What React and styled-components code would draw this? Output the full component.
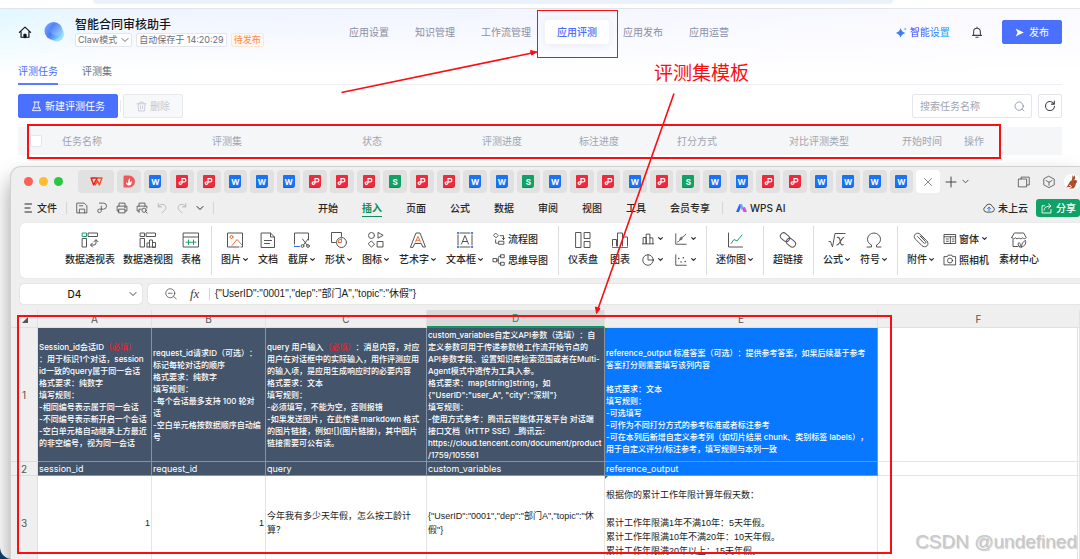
import React from "react";
import styled, { createGlobalStyle } from "styled-components";

const TABS = "DWPPWWWPPPSPPWWSWPPWPSWWPPWWWW".split("");

const NAV = ["应用设置", "知识管理", "工作流管理", "应用评测", "应用发布", "应用运营"];

const TASK_COLUMNS = [
  { label: "任务名称", width: 150 },
  { label: "评测集", width: 150 },
  { label: "状态", width: 120 },
  { label: "评测进度", width: 97 },
  { label: "标注进度", width: 98 },
  { label: "打分方式", width: 112 },
  { label: "对比评测类型", width: 113 },
  { label: "开始时间", width: 62 },
  { label: "操作", width: 110 },
];

const MENUS = ["开始", "插入", "页面", "公式", "数据", "审阅", "视图", "工具", "会员专享"];

const SHEET_COLUMNS = [
  { name: "A", width: 114 },
  { name: "B", width: 114 },
  { name: "C", width: 161 },
  { name: "D", width: 178 },
  { name: "E", width: 273 },
  { name: "F", width: 200 },
];

/* ---------- icons ---------- */

const Svg = ({ w = 16, h = w, box = "0 0 16 16", children }) => (
  <svg
    width={w}
    height={h}
    viewBox={box}
    fill="none"
    stroke="currentColor"
    strokeWidth="1"
    strokeLinecap="round"
    strokeLinejoin="round"
    aria-hidden="true"
  >
    {children}
  </svg>
);

const green = "#18a06a";
const orange = "#ee7034";
const blue = "#2f6df6";

const Chevron = ({ size = 8 }) => (
  <Svg w={size} box="0 0 8 8">
    <path d="M1 2.500l3 3 3-3" strokeWidth={size < 6 ? 1.8 : 1} />
  </Svg>
);

const HomeIcon = () => (
  <Svg w={14}>
    <path d="M1.500 8.500L8 2.500l6.500 6M3.500 7.500V14h9V7.500" strokeWidth="1.300" />
    <path d="M6.700 14v-3.500h2.600V14z" fill="currentColor" />
  </Svg>
);

const AppLogo = () => (
  <svg width="22" height="22" viewBox="0 0 22 22" aria-hidden="true">
    <defs>
      <linearGradient id="orb" x1="0" y1="0.200" x2="1" y2="0.800">
        <stop offset="0" stopColor="#6f97ff" />
        <stop offset="0.450" stopColor="#3f6ff5" />
        <stop offset="1" stopColor="#8fe0ff" />
      </linearGradient>
      <linearGradient id="orbIn" x1="0" y1="0" x2="1" y2="1">
        <stop offset="0" stopColor="#3a6cf6" />
        <stop offset="1" stopColor="#a5d6ff" />
      </linearGradient>
    </defs>
    <circle cx="13.500" cy="13" r="7.500" fill="#9be0fb" />
    <circle cx="10.500" cy="10" r="9" fill="url(#orb)" opacity="0.900" />
    <circle cx="13" cy="8.500" r="6" fill="url(#orbIn)" />
  </svg>
);

const SparkIcon = () => (
  <svg width="11" height="11" viewBox="0 0 12 12" aria-hidden="true">
    <path d="M5 1.200Q6 5.500 10.300 6.500Q6 7.500 5 11.800Q4 7.500-.300 6.500Q4 5.500 5 1.200z" fill="#3f7bff" />
    <path d="M10 .500q.200 1.500 1.700 1.700q-1.500.200-1.700 1.700q-.200-1.500-1.700-1.700q1.500-.200 1.700-1.700z" fill="#35c0ff" />
  </svg>
);

const BellIcon = () => (
  <Svg w={12}>
    <path d="M2 12.500h12M3.500 12.500V7.500a4.500 4.500 0 019 0v5M8 1.500V3M6.500 15h3" strokeWidth="1.400" />
  </Svg>
);

const SendIcon = () => (
  <svg width="9" height="9" viewBox="0 0 10 10" aria-hidden="true">
    <path d="M.8.600L9.800 5L.8 9.400L2.800 5z" fill="#fff" />
  </svg>
);

const FlaskIcon = () => (
  <Svg w={11}>
    <path d="M4 1.500h8M5.500 1.500v5L2 14h12l-3.500-7.500v-5M4 10h8" strokeWidth="1.300" />
  </Svg>
);

const TrashIcon = () => (
  <Svg w={11}>
    <path d="M1.500 4h13M5.500 4V1.800h5V4M3 4l.7 10.500h8.600L13 4M6.500 7v4.500M9.500 7v4.500" strokeWidth="1.300" />
  </Svg>
);

const SearchIcon = () => (
  <Svg w={11}>
    <circle cx="7.500" cy="7.500" r="6" strokeWidth="1.300" />
    <path d="M11.800 11.800l2.700 2.700" strokeWidth="1.300" />
  </Svg>
);

const RefreshIcon = () => (
  <Svg w={12}>
    <path d="M14 8.500A6 6 0 118 2c2.300 0 4.200 1.200 5.200 3M13.800 1.500v4h-4" strokeWidth="1.400" />
  </Svg>
);

const WpsLogo = () => (
  <Svg w={13} h={9} box="0 0 14 10">
    <path d="M5.500 1.200h7.500L10.200 8.800 8 4 5.600 8.800" stroke="#f4502e" strokeWidth="1.600" />
    <path d="M5.500 1.200H1L3.800 8.800 7.500 1.500" stroke="#e2231a" strokeWidth="1.600" />
  </Svg>
);

const PdfMark = () => (
  <Svg w={9} box="0 0 9 9">
    <path d="M3.800 1.600h2.500a1.500 1.500 0 010 3.200H2.400a1.200 1.200 0 100 2.500c1 0 1.600-.600 1.600-1.500V1.600" stroke="#fff" strokeWidth="1.200" />
  </Svg>
);

const DocerIcon = () => (
  <svg width="12" height="13" viewBox="0 0 12 13" aria-hidden="true">
    <path d="M1.500.500H6a6 6 0 010 12H1.500A1 1 0 01.5 11.500v-10a1 1 0 011-1z" fill="#f0565a" />
    <path d="M6.200 10.500c-2.400 0-3.200-1.600-3.200-3.200 1 .2 1.700.6 2.100 1.300C5 6.500 5.300 4.500 6.600 3c.5 1.800.4 3 .2 4.700.4-.9 1-1.500 2-1.800.1 2.800-.6 4.600-2.600 4.600z" fill="#fff" />
  </svg>
);

const Kangaroo = () => (
  <svg width="16" height="16" viewBox="0 0 16 16" aria-hidden="true">
    <circle cx="8" cy="8" r="8" fill="#fff" />
    <path d="M8.500 1l1 2 1.200-2 .5 3-.8 2 1.600 3-.8 3.500-2 2H5l3-1.500-2-2.500c-1 2-2 3-4 3 2-1.500 2.500-4 4-6l2-1.500z" fill="#a4532a" />
    <circle cx="11.500" cy="7.500" r="1.500" fill="#d8262c" />
    <path d="M4 12.500h2.500" stroke="#d8262c" />
  </svg>
);

const quick = {
  save: <path d="M1.500 1.500h9.500l3.500 3.500v9.500h-13zM4.500 14.500V9.500h7v5M4.500 5h4.500" />,
  pdf: <path d="M4.500 1.500h5.500a4 4 0 010 8H4.500a2.300 2.300 0 100 4.600c1.600 0 2.600-1 2.600-2.600V5.500" />,
  print: <path d="M4 5.500v-4h8v4M4 12H1.500V5.500h13V12H12M4 9.500h8v5H4zM11.500 7.500h1" />,
  preview: (
    <>
      <path d="M4 5.500v-4h8v4M4 12H1.500V5.500h13V8M4 14V9.500h3" />
      <circle cx="10.800" cy="11" r="2.800" />
      <path d="M13 13l2 2" />
    </>
  ),
  undo: <path d="M3 2v4.500h4.500M3 6.500C5 3.200 9 2 11.500 4.200s2 5-.5 7.300l-3 3" stroke="#a8a8a8" />,
  redo: <path d="M13 2v4.500H8.500M13 6.500C11 3.200 7 2 4.500 4.200s-2 5 .5 7.300l3 3" stroke="#a8a8a8" />,
};

const glyph = {
  pivot: (
    <>
      <path d="M.5 1h4v3.500h-4z" stroke={green} />
      <path d="M6.500 1h9v3.500h-9zM.5 6.500h4V15h-4zM9 13h3a2 2 0 002-2V8M12 9.700l2-2 2 2M10.500 11l-2 2 2 2" />
    </>
  ),
  pivotChart: <path d="M.5 1h4v3.500h-4zM6.500 1h9v3.500h-9zM.5 6.500h4V15h-4zM7 15V11h2.500v4M9.500 15V8h3v7M12.500 15V10.500H15.500V15zM7 15h8" />,
  table: (
    <>
      <path d="M.5 1h15v14H.500zM.5 5h15" />
      <path d="M5.500 8v4.500M10.500 8v4.500M3 10.200h2M11 10.200h2M6 10.200h4" stroke={green} />
    </>
  ),
  picture: (
    <>
      <path d="M12 15H.500V1h15v14H14" />
      <circle cx="4.500" cy="5" r="1.500" stroke={orange} />
      <path d="M5 13.500l5-6 5 5.500" stroke={orange} />
    </>
  ),
  doc: <path d="M1.500 1h9l4 4v10.500h-13zM10.500 1v4h4M4.500 8.500h7M4.500 11.500h5" />,
  crop: (
    <>
      <path d="M.5 12V1h14v7" />
      <path d="M.5 14.500h5M.5 14v.500" stroke={blue} />
      <path d="M8.500 7l4.500 6M14 7l-4.500 6" />
      <circle cx="8.500" cy="14" r="1.400" />
      <circle cx="14" cy="14" r="1.400" />
    </>
  ),
  shape: (
    <>
      <path d="M4.500 10.500H.500V.500h10v4" />
      <circle cx="10.500" cy="10.500" r="5" />
      <path d="M10.500 7v3.500H7A3.500 3.500 0 0110.500 7z" stroke={orange} />
    </>
  ),
  icons: (
    <>
      <circle cx="3.500" cy="3.500" r="3" />
      <path d="M10 .8v5.400l4.800-2.700zM3.500 9.200l3 3-3 3-3-3zM9.500 9.500h5.500v5.500H9.500z" />
    </>
  ),
  wordArt: (
    <>
      <path d="M.5 15L6 1h4l5.500 14h-2.700l-1.500-3.500H4.700L3.200 15z" />
      <path d="M5.500 10L8 4.500l2.500 5.500M6.500 8.300h3" stroke={orange} />
    </>
  ),
  textBox: (
    <>
      <path d="M3 1h10M3 15h10M1 3v10M15 3v10M4.500 12L8 3.500l3.500 8.500M5.700 9.500h4.600" />
      <path d="M1 1h.1M15 1h.1M1 15h.1M15 15h.1" stroke={blue} strokeWidth="2.200" />
    </>
  ),
  flow: (
    <path d="M4 .500l3 3-3 3-3-3zM8 11h6.500v4H8zM9.500 3.500h4.500V8.500M12 6.800l2 2 1.500-2M3.500 9v4.500H6" />
  ),
  mind: <path d="M.5 6h4.500v4.500H.500zM10.500 1H15v4h-4.500zM10.500 11H15v4h-4.500zM5 8.200h2M10.500 3H9a2 2 0 00-2 2v6a2 2 0 002 2h1.500" />,
  dashboard: <path d="M1 .500h5v15H1zM9.500.500h5.500v6H9.500zM9.500 9.500h5.500v6H9.500z" />,
  chart: (
    <>
      <path d="M.5 14V7.500h4V14M5.500 14V1h5v13M11.500 5h4v9" />
      <path d="M.5 15.500h15" stroke={green} />
    </>
  ),
  bars: <path d="M1.500 14V6h4v8M5.500 14V1.500h5V14M10.500 6.500h4V14M.5 14.500h15" />,
  pie: (
    <>
      <circle cx="8" cy="8" r="7" />
      <path d="M8 1v7h7" />
    </>
  ),
  line: <path d="M1 1v14h14M3.500 12c2.500 0 3-3 3.500-5s3-1.500 2.500.5-3 2.500-2 .5S12 5 14.500 1.500" />,
  scatter: (
    <>
      <path d="M1 1v14h14" />
      <path d="M5 6h.1M8 10.500h.1M11 5h.1M13.500 10h.1" strokeWidth="1.800" />
    </>
  ),
  spark: (
    <>
      <path d="M1.500 1v14h14" />
      <path d="M4 11.500l3-4 3 1.500L15 3" stroke={green} />
    </>
  ),
  link: (
    <>
      <rect x="0" y="2" width="10" height="6.500" rx="3.200" transform="rotate(40 5 5.200)" />
      <rect x="6" y="7.500" width="10" height="6.500" rx="3.200" transform="rotate(40 11 10.700)" />
    </>
  ),
  formula: (
    <>
      <path d="M0 9.500h1.500l2 5.500L6 1.500h10" />
      <path d="M8.300 5.500c2-.5 2.500 1 3 4s1.200 4 3 3M14.800 5.500c-2.500 0-4 7.500-7 7.500" strokeWidth="1.100" />
    </>
  ),
  omega: <path d="M1 15h4.500v-2C3.300 12 1.500 10 1.500 7.300a6.500 6.300 0 0113 0C14.500 10 12.700 12 10.500 13v2H15" />,
  clip: <path d="M12 7L7.500 2.500C5.800.800 3.500.900 2.200 2.200S.800 5.500 2.500 7.200l6.300 6.300c1.600 1.600 3.900 1.600 5.200.3s1.300-3.500-.3-5.100L8 3.500M4.500 4.500l6.300 6.500c1.200 1.200 2.800-.3 1.600-1.500L7 4" />,
  form: <path d="M.5 2h15v12H.500zM.5 5h15M8.500 5v9M3 8h3M3 11h3M11 8h2.500M11 11h2.500" />,
  camera: (
    <>
      <path d="M.5 3.500h4l1-2h5l1 2h4v11H.500z" />
      <circle cx="8" cy="8.700" r="3.300" />
    </>
  ),
  material: <path d="M2 7.500V14.500h5M.8 5.500L3.300 1h9.400l2.500 4.500c-.5 1.500-2.700 1.500-3.500.3-.8 1.200-2.900 1.200-3.700 0-.8 1.200-2.900 1.200-3.700 0-.8 1.200-3 1.200-3.500-.3zM9 15c-2-1-2.500-3-1-4.500 1.500 1.300 2 2.700 1 4.500zM10.500 15c0-2.500 1-5.500 4-6.500.8 3.500-1 6-4 6.500z" />,
};

/* ---------- page ---------- */

const GlobalStyle = createGlobalStyle`
  * {
    box-sizing: border-box;
  }
  body {
    margin: 0;
    font-family: Inter, "Noto Sans CJK SC", sans-serif;
    font-size: 10px;
    line-height: 12px;
    color: #1b1b1b;
  }
  button, input {
    font: inherit;
    color: inherit;
    margin: 0;
    padding: 0;
    border: 0;
    background: none;
  }
  a {
    color: inherit;
    text-decoration: none;
  }
  svg {
    flex: none;
    display: block;
    overflow: visible;
  }
`;

const Desktop = styled.div`
  position: relative;
  height: 100vh;
  overflow: hidden;
  background: #0d3f6b;
`;

const Browser = styled.main`
  height: 100%;
  background: #fff;
  border-bottom-left-radius: 12px;
`;

const AddressStrip = styled.div`
  height: 9px;
  padding: 0 187px 0 93px;
  border-bottom: 1px solid #e2e4e8;

  div {
    height: 4px;
    background: #ecf2fb;
    border-radius: 0 0 8px 8px;
  }
`;

const Console = styled.section`
  background: linear-gradient(to bottom, rgba(255, 255, 255, 0) 0, #fff 66px),
    linear-gradient(to right, #e0f8ff, #eef4ff 12%, #f2f5ff 40%, #f8f8ff 80%, #fbfbff);
`;

const Header = styled.header`
  display: grid;
  grid-template-columns: 1fr auto 1fr;
  align-items: center;
  height: 46px;
  padding: 0 18px 0 16px;
`;

const Brand = styled.div`
  display: flex;
  align-items: center;
  padding-left: 2px;

  > svg {
    margin-left: 11px;
    margin-right: 10px;
  }
`;

const IconButton = styled.button`
  display: flex;
  align-items: center;
  justify-content: center;
  color: ${(p) => p.$color || "#3c3f45"};
`;

const AppTitle = styled.h1`
  margin: 0;
  font-size: 12px;
  line-height: 16px;
  font-weight: 500;
  color: #14171f;
`;

const Tags = styled.div`
  display: flex;
  gap: 4px;
`;

const Tag = styled.span`
  display: flex;
  align-items: center;
  gap: 4px;
  height: 14px;
  padding: 0 2px;
  font-size: 9px;
  white-space: nowrap;
  border: 1px solid ${(p) => (p.$warn ? "#ffe6d3" : "#e4e6eb")};
  border-radius: 2px;
  color: ${(p) => (p.$warn ? "#ff8a4c" : "#686d7a")};
  background: ${(p) => (p.$warn ? "#fff6ee" : "#fff")};
`;

const Nav = styled.nav`
  display: flex;
  gap: 2px;
`;

const NavLink = styled.a`
  padding: 6px 12px;
  border-radius: 4px;
  white-space: nowrap;
  color: ${(p) => (p.$active ? "#4a6cff" : "#8a90a3")};
  font-weight: ${(p) => (p.$active ? 500 : 400)};
  background: ${(p) => (p.$active ? "#fff" : "none")};
  box-shadow: ${(p) => (p.$active ? "0 2px 8px rgba(60, 70, 120, 0.08)" : "none")};
`;

const Actions = styled.div`
  display: flex;
  align-items: center;
  justify-content: flex-end;
`;

const SmartLink = styled.a`
  display: flex;
  align-items: center;
  gap: 3px;
  margin-right: 21px;
  font-weight: 500;

  span {
    color: transparent;
    background: linear-gradient(to right, #5a5cff, #2bb6ff);
    background-clip: text;
  }
`;

const Button = styled.button`
  display: flex;
  align-items: center;
  justify-content: center;
  gap: 3px;
  height: 24px;
  padding: 0 12px;
  border-radius: 2px;
  white-space: nowrap;
  color: ${(p) => (p.disabled ? "#c6cad3" : "#fff")};
  background: ${(p) => (p.disabled ? "#f7f8fa" : "#4a70ff")};
  border: 1px solid ${(p) => (p.disabled ? "#e6e8ec" : "#4a70ff")};
`;

const PublishButton = styled(Button)`
  gap: 5px;
  margin-left: 19px;
`;

const Tabs = styled.nav`
  display: flex;
  gap: 24px;
  margin: 0 18px;
  padding-top: 10px;
  border-bottom: 1px solid #eceef1;
`;

const Tab = styled.a`
  padding-bottom: 6px;
  margin-bottom: -1px;
  border-bottom: 2px solid ${(p) => (p.$active ? "#5b7bff" : "transparent")};
  color: ${(p) => (p.$active ? "#4a6cff" : "#686d7a")};
`;

const Toolbar = styled.div`
  display: flex;
  align-items: center;
  gap: 2px;
  padding: 9px 18px;
`;

const ToolbarRule = styled.i`
  width: 1px;
  height: 12px;
  background: #e6e8ec;
`;

const SearchBox = styled.label`
  display: flex;
  align-items: center;
  width: 120px;
  height: 24px;
  margin-left: auto;
  margin-right: 4px;
  padding: 0 6px 0 7px;
  border: 1px solid #e4e6eb;
  border-radius: 2px;
  color: #8f95a5;

  input {
    flex: 1;
    min-width: 0;
    outline: 0;
  }
  input::placeholder {
    color: #a0a5b3;
  }
`;

const RefreshButton = styled(IconButton)`
  width: 24px;
  height: 24px;
  border: 1px solid #e4e6eb;
  border-radius: 2px;
`;

const TaskArea = styled.div`
  padding: 0 18px;
`;

const TaskTable = styled.table`
  width: 100%;
  table-layout: fixed;
  border-collapse: collapse;
  background: #f5f6f8;

  th {
    height: 28px;
    padding: 0 0 0 12px;
    text-align: left;
    font-weight: 400;
    color: #a0a5b2;
    white-space: nowrap;
  }
  input {
    display: block;
    appearance: none;
    width: 12px;
    height: 12px;
    background: #fff;
    border: 1px solid #e4e6eb;
    border-radius: 2px;
  }
`;

/* ---------- spreadsheet window ---------- */

const SheetWindow = styled.section`
  margin: 12px 0 0 11px;
  background: #efefef;
  border-top-left-radius: 10px;
  color: #262626;
  box-shadow: 0 0 0 1px #d2d2d2, 0 12px 22px rgba(0, 0, 0, 0.42);
`;

const TitleBar = styled.div`
  display: flex;
  align-items: center;
  gap: 3px;
  padding: 3px 0 3px 13px;
`;

const Lights = styled.div`
  display: flex;
  gap: 6px;
  margin-right: 12px;
`;

const Light = styled.i`
  width: 9px;
  height: 9px;
  border-radius: 50%;
  background: ${(p) => p.$color};
`;

const FileTab = styled.button`
  display: flex;
  align-items: center;
  justify-content: center;
  flex: ${(p) => (p.$home ? "0 0 36px" : "1 1 0")};
  min-width: 0;
  height: 23px;
  border-radius: 4px;
  color: #888;
  background: ${(p) => (p.$active ? "#fff" : "#e1e1e1")};
`;

const fileColors = { W: "#1a73f5", P: "#ee2a3c", S: "#0fa267" };

const FileBadge = styled.span`
  display: flex;
  align-items: center;
  justify-content: center;
  width: 12px;
  height: 13px;
  border-radius: 1px 1px 3px 1px;
  font-size: 8px;
  font-weight: 700;
  color: #fff;
  background: ${(p) => fileColors[p.$type]};
  box-shadow: inset 0 -1px 0 rgba(0, 0, 0, 0.15);
`;

const WindowTools = styled.div`
  display: flex;
  align-items: center;
  width: 137px;
  padding-left: 3px;
  color: #444;
`;

const Spacer = styled.span`
  flex: ${(p) => (p.$grow ? 1 : "none")};
  width: ${(p) => p.$width || 0}px;
`;

const MenuBar = styled.div`
  display: flex;
  align-items: center;
  padding: 3px 0 6px 13px;
  font-weight: 500;
`;

const FileMenu = styled.button`
  display: flex;
  align-items: center;
  gap: 5px;
`;

const Rule = styled.i`
  width: 1px;
  height: 12px;
  margin: 0 9px;
  background: #d4d4d4;
`;

const QuickTools = styled.div`
  display: flex;
  align-items: center;
  gap: 8px;
`;

const MenuTabs = styled.nav`
  display: flex;
  gap: 24px;
  margin-left: 95px;
  margin-right: 3px;
`;

const MenuTab = styled.a`
  padding: 3px 0 2px;
  white-space: nowrap;
  border-bottom: 1px solid ${(p) => (p.$active ? "#0d8f5a" : "transparent")};
  color: ${(p) => (p.$active ? "#0d8f5a" : "inherit")};
  font-weight: ${(p) => (p.$active ? 700 : 500)};
`;

const AiLink = styled.a`
  display: flex;
  align-items: center;
  gap: 3px;
  margin-left: 4px;
  white-space: nowrap;
`;

const CloudState = styled.button`
  display: flex;
  align-items: center;
  gap: 3px;
  margin-left: auto;
  margin-right: 8px;
  white-space: nowrap;
`;

const ShareButton = styled.button`
  display: flex;
  align-items: center;
  gap: 4px;
  width: 44px;
  height: 18px;
  padding-left: 5px;
  border-radius: 3px;
  white-space: nowrap;
  color: #fff;
  background: #0fa267;
`;

const Ribbon = styled.div`
  display: flex;
  height: 55px;
  margin-left: 9px;
  padding: 3px 0 3px 45px;
  background: #fff;
  border-radius: 5px 0 0 5px;
  box-shadow: 0 0 1px rgba(0, 0, 0, 0.2);
  overflow: hidden;
`;

const Group = styled.div`
  display: flex;
  gap: ${(p) => p.$gap || 10}px;
  padding-top: 6px;

  & + & {
    margin-left: 10px;
    padding-left: 9px;
    border-left: 1px solid #dcdcdc;
  }
`;

const Tool = styled.button`
  display: flex;
  flex-direction: column;
  align-items: center;
  gap: 5px;
  height: 33px;
  font-weight: 500;
  white-space: nowrap;
  color: #555;

  span {
    display: flex;
    align-items: center;
    gap: 2px;
    color: #262626;
  }
`;

const ToolStack = styled.div`
  display: grid;
  align-content: start;
  gap: 8px;
`;

const SmallTool = styled.button`
  display: flex;
  align-items: center;
  gap: ${(p) => (p.$bare ? 4 : 3)}px;
  height: 13px;
  font-weight: 500;
  white-space: nowrap;
`;

const FormulaBar = styled.div`
  display: flex;
  gap: 6px;
  padding: 6px 0 6px 9px;
`;

const Field = styled.label`
  display: flex;
  align-items: center;
  height: 20px;
  background: #fff;
  border-radius: 3px;
  box-shadow: 0 0 1px rgba(0, 0, 0, 0.35);
  color: #444;

  input {
    outline: 0;
    min-width: 0;
    flex: 1;
    color: #1b1b1b;
  }
`;

const NameBox = styled(Field)`
  width: 122px;
  padding: 0 5px 0 0;

  input {
    text-align: center;
    font-weight: 500;
  }
`;

const FormulaField = styled(Field)`
  flex: 1;
  padding-left: 17px;
  border-radius: 3px 0 0 3px;

  input {
    font-family: "Liberation Sans", "Noto Sans CJK SC", sans-serif;
  }
`;

const Fx = styled.em`
  margin-left: 13px;
  width: 12px;
  font-family: "Liberation Serif", serif;
  font-size: 13px;
`;

const FormulaRule = styled(Rule)`
  margin: 0 5px 0 7px;
`;

const Sheet = styled.table`
  width: 100%;
  table-layout: fixed;
  border-collapse: separate;
  border-spacing: 0;
  background: #fff;
`;

const ColHead = styled.th`
  height: 18px;
  padding: 0;
  font-weight: 400;
  color: ${(p) => (p.$on ? "#0d8f5a" : "#555")};
  background: ${(p) => (p.$on ? "#dadada" : "#efefef")};
  border-right: 1px solid #e2e2e2;
  border-bottom: ${(p) => (p.$on ? "2px solid #0d9a60" : "1px solid #e0e0e0")};
`;

const Corner = styled(ColHead)`
  text-align: right;

  svg {
    display: inline-block;
    margin-right: 9px;
  }
`;

const RowHead = styled.th`
  height: ${(p) => p.$height}px;
  padding: 0;
  font-weight: 400;
  color: #555;
  background: #efefef;
  border-right: 1px solid #e0e0e0;
  border-bottom: 1px solid #dcdcdc;
`;

const fills = { slate: "#44546a", blue: "#0778ff" };

const Cell = styled.td`
  position: relative;
  padding: 0 1px;
  vertical-align: middle;
  white-space: nowrap;
  border-right: 1px solid ${(p) => (p.$fill ? "#8793a3" : "#e4e4e4")};
  border-bottom: 1px solid ${(p) => (p.$fill ? "#8793a3" : "#e4e4e4")};
  background: ${(p) => fills[p.$fill] || "#fff"};
  color: ${(p) => (p.$fill ? "#fff" : "#1b1b1b")};
  text-align: ${(p) => (p.$right ? "right" : "left")};
`;

const GuideCell = styled(Cell)`
  font-size: 8px;
  line-height: 12px;
  font-weight: 500;
  white-space: pre;
  text-spacing-trim: space-all;

  b {
    font-weight: 500;
    color: #f0202a;
  }
`;

const KeyCell = styled(Cell)`
  font-size: 9px;
  line-height: 13px;
`;

const ValueCell = styled(Cell)`
  font-family: "Liberation Sans", "Noto Sans CJK SC", sans-serif;
  font-size: 9px;
  line-height: 14px;
  white-space: pre;
`;

const ErrorMark = styled.i`
  position: absolute;
  top: 0;
  left: 0;
  border-top: 3px solid #12883a;
  border-right: 3px solid transparent;
`;

/* ---------- markup drawn over the page ---------- */

const Frame = styled.div`
  position: absolute;
  left: ${(p) => p.$x}px;
  top: ${(p) => p.$y}px;
  width: ${(p) => p.$w}px;
  height: ${(p) => p.$h}px;
  border: ${(p) => p.$line || 1}px solid #fb0d12;
  pointer-events: none;
`;

const Arrows = styled.svg`
  position: absolute;
  left: 0;
  top: 0;
  pointer-events: none;
`;

const Callout = styled.p`
  position: absolute;
  left: 654px;
  top: 62px;
  margin: 0;
  font-size: 19px;
  line-height: 24px;
  color: #fb0d12;
`;

const Watermark = styled.p`
  position: absolute;
  right: 3px;
  bottom: 5px;
  margin: 0;
  font-family: "Liberation Sans", sans-serif;
  font-size: 19px;
  line-height: 24px;
  color: #c6c8cb;
  text-shadow: 1px 1px 1px rgba(0, 0, 0, 0.2);
`;

const BigTool = ({ icon, label, menu }) => (
  <Tool>
    <Svg>{glyph[icon]}</Svg>
    <span>
      {label}
      {menu && <Chevron size={5} />}
    </span>
  </Tool>
);

const MiniTool = ({ icon, label, menu }) => (
  <SmallTool $bare={!label} aria-label={label || icon}>
    <Svg w={12}>{glyph[icon]}</Svg>
    {label}
    {menu && <Chevron size={5} />}
  </SmallTool>
);

const ConsolePage = () => (
  <Console>
    <Header>
      <Brand>
        <IconButton aria-label="首页" $color="#111">
          <HomeIcon />
        </IconButton>
        <AppLogo />
        <div>
          <AppTitle>智能合同审核助手</AppTitle>
          <Tags>
            <Tag>
              Claw模式 <Chevron />
            </Tag>
            <Tag>自动保存于 14:20:29</Tag>
            <Tag $warn>待发布</Tag>
          </Tags>
        </div>
      </Brand>
      <Nav>
        {NAV.map((label) => (
          <NavLink key={label} href="#" $active={label === "应用评测"}>
            {label}
          </NavLink>
        ))}
      </Nav>
      <Actions>
        <SmartLink href="#">
          <SparkIcon />
          <span>智能设置</span>
        </SmartLink>
        <IconButton aria-label="通知">
          <BellIcon />
        </IconButton>
        <PublishButton>
          <SendIcon />
          发布
        </PublishButton>
      </Actions>
    </Header>
    <Tabs>
      <Tab href="#" $active>
        评测任务
      </Tab>
      <Tab href="#">评测集</Tab>
    </Tabs>
    <Toolbar>
      <Button>
        <FlaskIcon />
        新建评测任务
      </Button>
      <ToolbarRule />
      <Button disabled>
        <TrashIcon />
        删除
      </Button>
      <SearchBox>
        <input placeholder="搜索任务名称" aria-label="搜索任务名称" />
        <SearchIcon />
      </SearchBox>
      <RefreshButton aria-label="刷新">
        <RefreshIcon />
      </RefreshButton>
    </Toolbar>
    <TaskArea>
      <TaskTable>
        <colgroup>
          <col width="32" />
          {TASK_COLUMNS.map((c) => (
            <col key={c.label} width={c.width} />
          ))}
        </colgroup>
        <thead>
          <tr>
            <th>
              <input type="checkbox" aria-label="全选" />
            </th>
            {TASK_COLUMNS.map((c) => (
              <th key={c.label}>{c.label}</th>
            ))}
          </tr>
        </thead>
      </TaskTable>
    </TaskArea>
  </Console>
);

const FileTabs = () => (
  <TitleBar>
    <Lights>
      <Light $color="#fe5f57" />
      <Light $color="#febc2e" />
      <Light $color="#28c840" />
    </Lights>
    <FileTab $home aria-label="WPS">
      <WpsLogo />
    </FileTab>
    {TABS.map((type, i) => (
      <FileTab key={i}>
        {type === "D" ? <DocerIcon /> : <FileBadge $type={type}>{type === "P" ? <PdfMark /> : type}</FileBadge>}
      </FileTab>
    ))}
    <FileTab $active aria-label="关闭">
      <Svg w={8} box="0 0 8 8">
        <path d="M.5.500l7 7M7.500.500l-7 7" />
      </Svg>
    </FileTab>
    <WindowTools>
      <Svg w={10}>
        <path d="M8 0v16M0 8h16" strokeWidth="1.600" />
      </Svg>
      <Spacer $width={6} />
      <Chevron size={7} />
      <Spacer $grow />
      <Svg w={12}>
        <path d="M1 4h10.500v10.500H1zM4 4V1.500h11v10.500h-3" />
      </Svg>
      <Spacer $width={13} />
      <Svg w={12}>
        <path d="M8 .500l7 3.700v7.600l-7 3.700-7-3.700V4.200zM4 6L8 8.300l4-2.300M8 8.300V12.500" />
      </Svg>
      <Spacer $width={9} />
      <Kangaroo />
    </WindowTools>
  </TitleBar>
);

const Menus = () => (
  <MenuBar>
    <FileMenu>
      <Svg w={8} h={10} box="0 0 8 10">
        <path d="M1 1h6.500M1 5h5M1 9h6.500" />
      </Svg>
      文件
    </FileMenu>
    <Rule />
    <QuickTools>
      {Object.keys(quick).map((k) => (
        <IconButton key={k} aria-label={k}>
          <Svg w={12}>{quick[k]}</Svg>
        </IconButton>
      ))}
      <Chevron />
    </QuickTools>
    <Rule />
    <MenuTabs>
      {MENUS.map((label) => (
        <MenuTab key={label} href="#" $active={label === "插入"}>
          {label}
        </MenuTab>
      ))}
    </MenuTabs>
    <Rule />
    <AiLink href="#">
      <svg width="11" height="10" viewBox="0 0 11 10" aria-hidden="true">
        <path d="M0 9l3.500-8h2.500L3 9z" fill="#2a62f5" />
        <path d="M3.500 1H6l2 5-2.500 1z" fill="#6fa8ff" />
        <path d="M7 4.500l2-.5 2 5H7.500L6.500 7z" fill="#e34be0" />
      </svg>
      WPS AI
    </AiLink>
    <CloudState>
      <Svg w={12}>
        <path d="M4.500 13.500a3.700 3.700 0 01-1-7.200 4.700 4.700 0 019.100 0 3.700 3.700 0 01-1 7.200z" />
        <path d="M8 12V7M6 8.800L8 6.800l2 2" stroke={blue} strokeWidth="1.300" />
      </Svg>
      未上云
    </CloudState>
    <ShareButton>
      <Svg w={11}>
        <path d="M5 4H1.500v10.500h13V9.500M4.500 10.500C4.500 6.500 8 4.500 14 4.500M11 1.200l3.500 3.300-3.500 3" strokeWidth="1.300" />
      </Svg>
      分享
    </ShareButton>
  </MenuBar>
);

const InsertRibbon = () => (
  <Ribbon>
    <Group $gap={8}>
      <BigTool icon="pivot" label="数据透视表" />
      <BigTool icon="pivotChart" label="数据透视图" />
      <BigTool icon="table" label="表格" />
    </Group>
    <Group>
      <BigTool icon="picture" label="图片" menu />
      <BigTool icon="doc" label="文档" />
      <BigTool icon="crop" label="截屏" menu />
      <BigTool icon="shape" label="形状" menu />
      <BigTool icon="icons" label="图标" menu />
      <BigTool icon="wordArt" label="艺术字" menu />
      <BigTool icon="textBox" label="文本框" menu />
      <ToolStack>
        <MiniTool icon="flow" label="流程图" />
        <MiniTool icon="mind" label="思维导图" />
      </ToolStack>
    </Group>
    <Group $gap={12}>
      <BigTool icon="dashboard" label="仪表盘" />
      <BigTool icon="chart" label="图表" />
      <ToolStack>
        <MiniTool icon="bars" menu />
        <MiniTool icon="pie" menu />
      </ToolStack>
      <ToolStack>
        <MiniTool icon="line" menu />
        <MiniTool icon="scatter" menu />
      </ToolStack>
    </Group>
    <Group>
      <BigTool icon="spark" label="迷你图" menu />
    </Group>
    <Group>
      <BigTool icon="link" label="超链接" />
    </Group>
    <Group>
      <BigTool icon="formula" label="公式" menu />
      <BigTool icon="omega" label="符号" menu />
    </Group>
    <Group>
      <BigTool icon="clip" label="附件" menu />
      <ToolStack>
        <MiniTool icon="form" label="窗体" menu />
        <MiniTool icon="camera" label="照相机" />
      </ToolStack>
      <BigTool icon="material" label="素材中心" />
    </Group>
  </Ribbon>
);

const Grid = () => (
  <Sheet>
    <colgroup>
      <col width="27" />
      {SHEET_COLUMNS.map((c) => (
        <col key={c.name} width={c.width} />
      ))}
      <col />
    </colgroup>
    <thead>
      <tr>
        <Corner>
          <svg width="6" height="6" viewBox="0 0 6 6" aria-hidden="true">
            <path d="M6 0v6H0z" fill="#555" />
          </svg>
        </Corner>
        {SHEET_COLUMNS.map((c) => (
          <ColHead key={c.name} $on={c.name === "D"} colSpan={c.name === "F" ? 2 : 1}>
            {c.name}
          </ColHead>
        ))}
      </tr>
    </thead>
    <tbody>
      <tr>
        <RowHead $height={134}>1</RowHead>
        <GuideCell $fill="slate">
          <div>
            Session_id会话ID<b>（必填）</b>
          </div>
          {`：用于标识1个对话，session
id一致的query属于同一会话
格式要求：纯数字
填写规则：
-相同编号表示属于同一会话
-不同编号表示新开启一个会话
-空白单元格自动继承上方最近
的非空编号，视为同一会话`}
        </GuideCell>
        <GuideCell $fill="slate">
          {`request_id请求ID（可选）：
标记每轮对话的顺序
格式要求：纯数字
填写规则：
-每个会话最多支持 100 轮对
话
-空白单元格按数据顺序自动编
号`}
        </GuideCell>
        <GuideCell $fill="slate">
          <div>
            query 用户输入<b>（必填）</b>：消息内容，对应
          </div>
          {`用户在对话框中的实际输入，用作评测应用
的输入项，是应用生成响应时的必要内容
格式要求：文本
填写规则：
-必须填写，不能为空，否则报错
-如果发送图片，在此传递 markdown 格式
的图片链接，例如![](图片链接)，其中图片
链接需要可公有读。`}
        </GuideCell>
        <GuideCell $fill="slate">
          {`custom_variables自定义API参数（选填）：自
定义参数可用于传递参数给工作流开始节点的
API参数字段、设置知识库检索范围或者在Multi-
Agent模式中透传为工具入参。
格式要求：map[string]string，如
{"UserID":"user_A", "city":"深圳"}
填写规则：
-使用方式参考：腾讯云智能体开发平台 对话端
接口文档（HTTP SSE）_腾讯云:
https://cloud.tencent.com/document/product
/1759/105561`}
        </GuideCell>
        <GuideCell $fill="blue">
          <ErrorMark />
          {`
reference_output 标准答案（可选）：提供参考答案，如果后续基于参考
答案打分则需要填写该列内容

格式要求：文本
填写规则：
-可选填写
-可作为不同打分方式的参考标准或者标注参考
-可在本列后新增自定义参考列（如切片结果 chunk、类别标签 labels），
用于自定义评分/标注参考，填写规则与本列一致`}
        </GuideCell>
        <Cell />
        <Cell />
      </tr>
      <tr>
        <RowHead $height={14}>2</RowHead>
        <KeyCell $fill="slate">session_id</KeyCell>
        <KeyCell $fill="slate">request_id</KeyCell>
        <KeyCell $fill="slate">query</KeyCell>
        <KeyCell $fill="slate">custom_variables</KeyCell>
        <KeyCell $fill="blue">reference_output</KeyCell>
        <Cell />
        <Cell />
      </tr>
      <tr>
        <RowHead $height={94}>3</RowHead>
        <ValueCell $right>1</ValueCell>
        <ValueCell $right>1</ValueCell>
        <ValueCell>{"今年我有多少天年假，怎么按工龄计\n算？"}</ValueCell>
        <ValueCell>{'{"UserID":"0001","dep":"部门A","topic":"休\n假"}'}</ValueCell>
        <ValueCell>
          <ErrorMark />
          {`根据你的累计工作年限计算年假天数：

累计工作年限满1年不满10年：5天年假。
累计工作年限满10年不满20年：10天年假。
累计工作年限满20年以上：15天年假。`}
        </ValueCell>
        <Cell />
        <Cell />
      </tr>
    </tbody>
  </Sheet>
);

const App = () => (
  <Desktop lang="zh-CN">
    <GlobalStyle />
    <Browser>
      <AddressStrip>
        <div />
      </AddressStrip>
      <ConsolePage />
      <SheetWindow>
        <FileTabs />
        <Menus />
        <InsertRibbon />
        <FormulaBar>
          <NameBox>
            <input defaultValue="D4" aria-label="名称框" />
            <Chevron />
          </NameBox>
          <FormulaField>
            <Svg w={12}>
              <circle cx="7" cy="7" r="6" />
              <path d="M11.500 11.500l3.500 3M4.500 7h5" />
            </Svg>
            <Fx>fx</Fx>
            <FormulaRule />
            <input defaultValue={'{"UserID":"0001","dep":"部门A","topic":"休假"}'} aria-label="编辑栏" />
          </FormulaField>
        </FormulaBar>
        <Grid />
      </SheetWindow>
    </Browser>
    <Frame $x={537} $y={10} $w={81} $h={48} />
    <Frame $x={27} $y={124} $w={974} $h={35} $line={2} />
    <Frame $x={17} $y={315} $w={875} $h={239} $line={2} />
    <Arrows width="700" height="330" fill="#fb0d12" stroke="#fb0d12" strokeWidth="1.600" aria-hidden="true">
      <path d="M341.500 92.500L532 53M674 93.500L598 309" fill="none" />
      <path d="M537 52l-6.500-1.500 1 4.500zM596.500 313.500l-1-6.500 4.500 1.700z" strokeWidth="1" />
    </Arrows>
    <Callout>评测集模板</Callout>
    <Watermark>CSDN @undefined</Watermark>
  </Desktop>
);

export default App;
